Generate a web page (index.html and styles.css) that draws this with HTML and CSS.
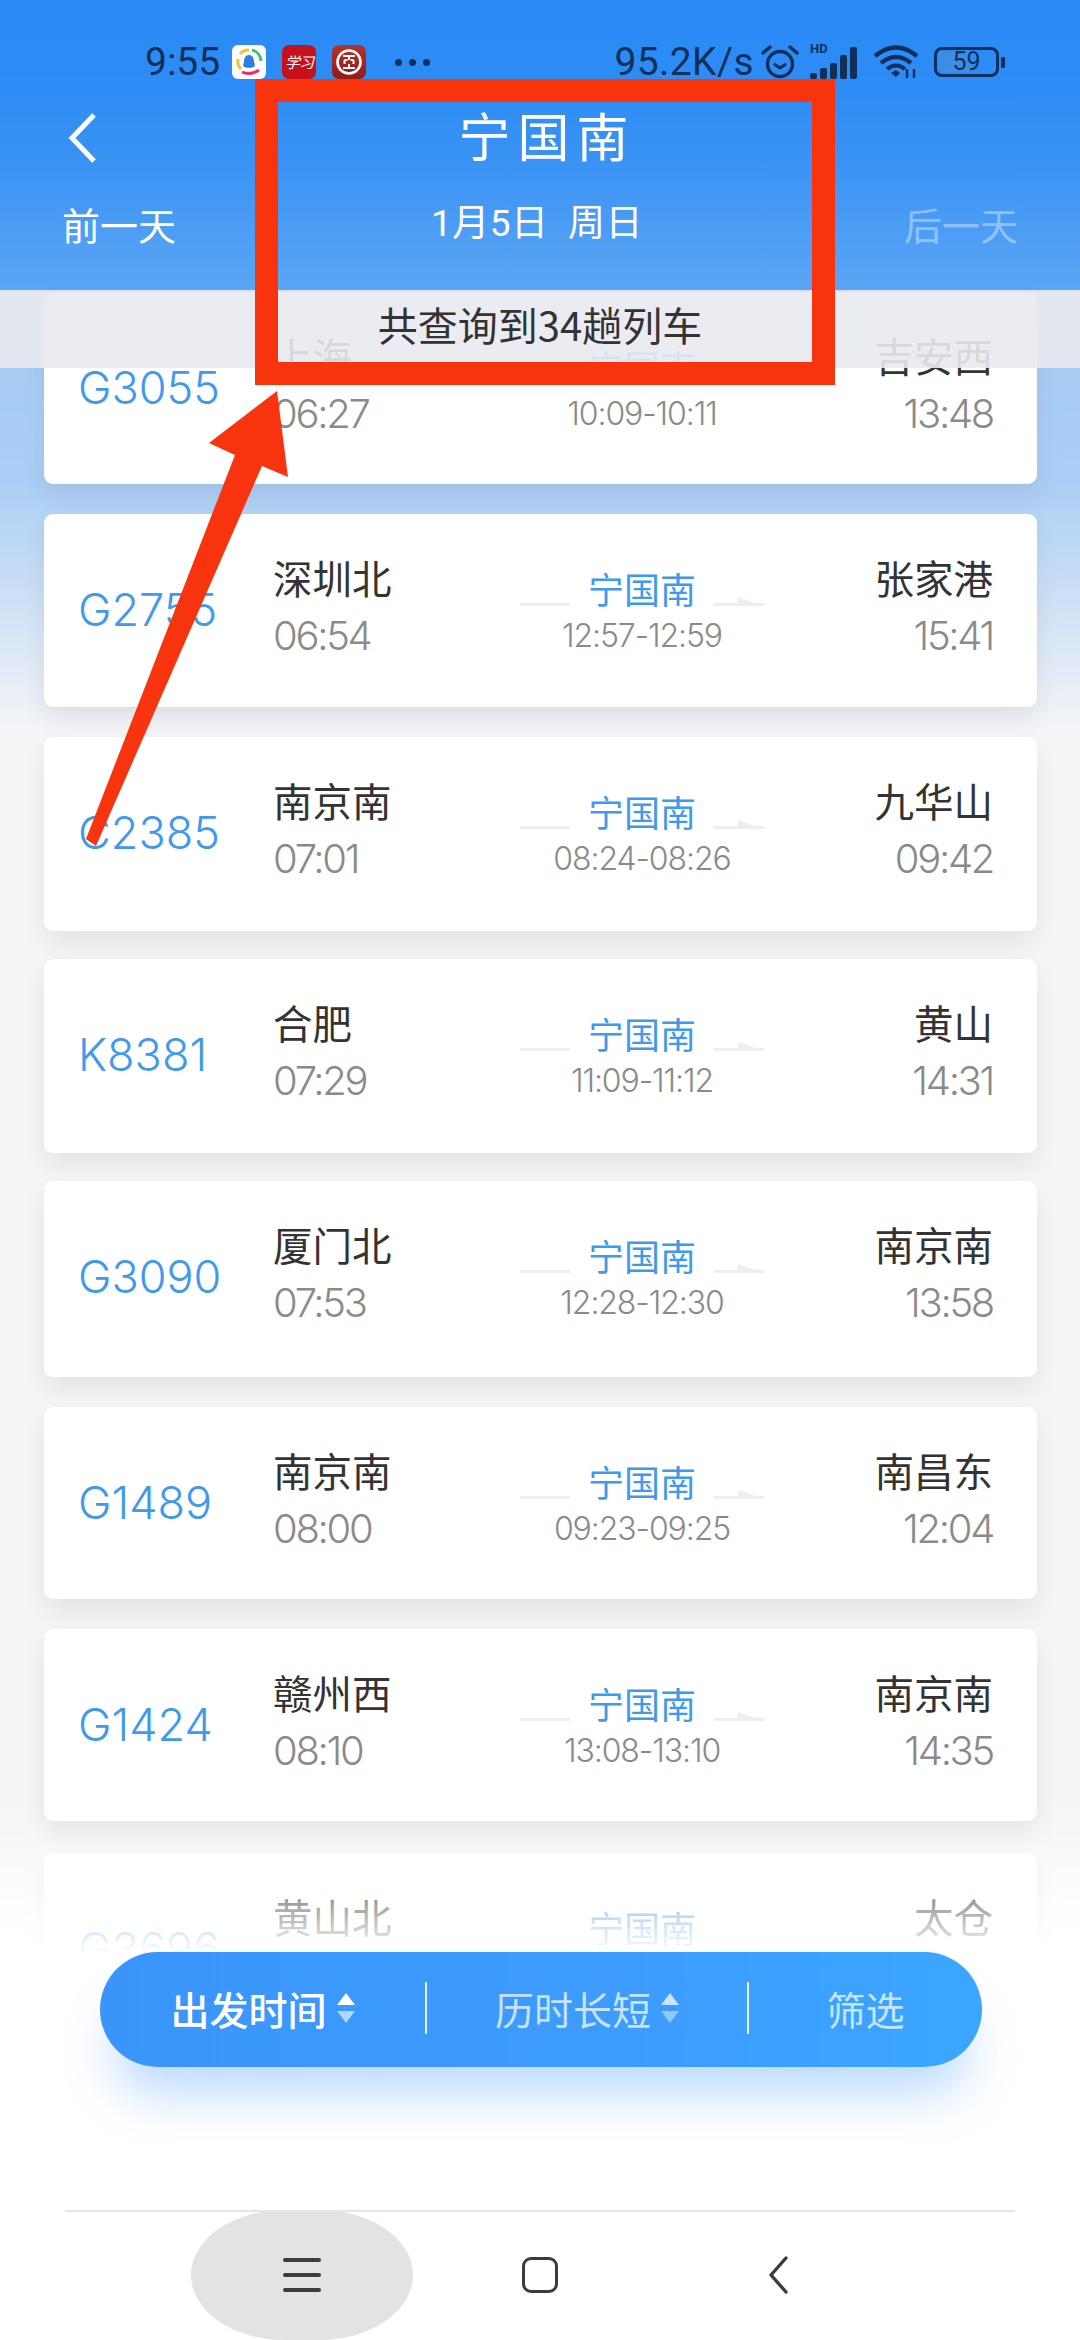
FILE: index.html
```html
<!DOCTYPE html>
<html lang="zh">
<head>
<meta charset="utf-8">
<title>宁国南</title>
<link rel="stylesheet" href="styles.css">
</head>
<body>
<div class="screen">
  <header class="header">
    <div class="status">
      <div class="status-left">
        <span class="clock">9:55</span>
        <svg class="app" viewBox="0 0 34 34"><rect width="34" height="34" rx="6" fill="#fff"/><path d="M9 24A11 11 0 0 1 6 14" fill="none" stroke="#f4c430" stroke-width="3"/><path d="M8 9A11 11 0 0 1 17 5" fill="none" stroke="#f4c430" stroke-width="3"/><path d="M20 5A12 12 0 0 1 29 16" fill="none" stroke="#3fc27a" stroke-width="3"/><path d="M10 27Q18 31 27 25" fill="none" stroke="#e8326e" stroke-width="3"/><path d="M17 10c4 0 5 4 5 7 1 2 1 4 0 5-2 1-8 1-10 0-1-1-1-3 0-5 0-3 1-7 5-7z" fill="#2c7de0"/></svg>
        <span class="app app-red">学习</span>
        <svg class="app" viewBox="0 0 34 34"><defs><linearGradient id="icbc" x1="0" y1="0" x2="0" y2="1"><stop offset="0" stop-color="#b9302a"/><stop offset="1" stop-color="#8f1d17"/></linearGradient></defs><rect width="34" height="34" rx="7" fill="url(#icbc)"/><circle cx="17" cy="17" r="11.5" fill="none" stroke="#fff" stroke-width="2.6"/><path d="M11 11h12M17 11v4M12.500 15h3M18.500 15h3M12.500 15v4M21.500 15v4M17 19v4M11 23h12" fill="none" stroke="#fff" stroke-width="2"/></svg>
        <span class="more"><i></i><i></i><i></i></span>
      </div>
      <div class="status-right">
        <span class="speed">95.2K/s</span>
        <svg class="ic-alarm" viewBox="0 0 40 34"><circle cx="20" cy="19" r="12.500" fill="none" stroke="#10305a" stroke-width="3.4"/><path d="M14 19l6 4 6-4" fill="none" stroke="#10305a" stroke-width="3"/><path d="M3 8l7-6M37 8l-7-6" stroke="#10305a" stroke-width="3.4" stroke-linecap="round"/></svg>
        <span class="signal"><span class="hd">HD</span><i class="b1"></i><i class="b2"></i><i class="b3"></i><i class="b4"></i><i class="b5"></i></span>
        <svg class="ic-wifi" viewBox="0 0 46 34"><path d="M2 11Q23-6 44 11" fill="none" stroke="#10305a" stroke-width="4.500"/><path d="M8 18Q23 6 38 18" fill="none" stroke="#10305a" stroke-width="4.500"/><path d="M14 24Q23 17 32 24" fill="none" stroke="#10305a" stroke-width="4"/><path d="M18 28l5-3 4 3-4 4z" fill="#10305a"/><path d="M34 24v9M41 24v9" stroke="#10305a" stroke-width="2.500"/></svg>
        <span class="battery"><span class="battery-fill"></span><span class="battery-num">59</span></span><span class="nub"></span>
      </div>
    </div>
    <div class="titlebar">
      <svg class="back" viewBox="0 0 32 52"><path d="M28 3L6 26l22 23" fill="none" stroke="#fff" stroke-width="5"/></svg>
      <h1 class="title">宁国南</h1>
    </div>
    <div class="datebar">
      <span class="day">前一天</span>
      <span class="date">1月5日&nbsp;&nbsp;周日</span>
      <span class="day day-off">后一天</span>
    </div>
  </header>

  <main class="list">
    <article class="card">
      <div class="num">G3055</div>
      <div class="from"><div class="stn">上海</div><div class="tm">06:27</div></div>
      <div class="mid"><div class="via"><span class="ln"></span><span class="vname">宁国南</span><span class="ln ln-r"></span></div><div class="stop">10:09-10:11</div></div>
      <div class="to"><div class="stn">吉安西</div><div class="tm">13:48</div></div>
    </article>
    <article class="card">
      <div class="num">G2755</div>
      <div class="from"><div class="stn">深圳北</div><div class="tm">06:54</div></div>
      <div class="mid"><div class="via"><span class="ln"></span><span class="vname">宁国南</span><span class="ln ln-r"></span></div><div class="stop">12:57-12:59</div></div>
      <div class="to"><div class="stn">张家港</div><div class="tm">15:41</div></div>
    </article>
    <article class="card">
      <div class="num">C2385</div>
      <div class="from"><div class="stn">南京南</div><div class="tm">07:01</div></div>
      <div class="mid"><div class="via"><span class="ln"></span><span class="vname">宁国南</span><span class="ln ln-r"></span></div><div class="stop">08:24-08:26</div></div>
      <div class="to"><div class="stn">九华山</div><div class="tm">09:42</div></div>
    </article>
    <article class="card">
      <div class="num">K8381</div>
      <div class="from"><div class="stn">合肥</div><div class="tm">07:29</div></div>
      <div class="mid"><div class="via"><span class="ln"></span><span class="vname">宁国南</span><span class="ln ln-r"></span></div><div class="stop">11:09-11:12</div></div>
      <div class="to"><div class="stn">黄山</div><div class="tm">14:31</div></div>
    </article>
    <article class="card">
      <div class="num">G3090</div>
      <div class="from"><div class="stn">厦门北</div><div class="tm">07:53</div></div>
      <div class="mid"><div class="via"><span class="ln"></span><span class="vname">宁国南</span><span class="ln ln-r"></span></div><div class="stop">12:28-12:30</div></div>
      <div class="to"><div class="stn">南京南</div><div class="tm">13:58</div></div>
    </article>
    <article class="card">
      <div class="num">G1489</div>
      <div class="from"><div class="stn">南京南</div><div class="tm">08:00</div></div>
      <div class="mid"><div class="via"><span class="ln"></span><span class="vname">宁国南</span><span class="ln ln-r"></span></div><div class="stop">09:23-09:25</div></div>
      <div class="to"><div class="stn">南昌东</div><div class="tm">12:04</div></div>
    </article>
    <article class="card">
      <div class="num">G1424</div>
      <div class="from"><div class="stn">赣州西</div><div class="tm">08:10</div></div>
      <div class="mid"><div class="via"><span class="ln"></span><span class="vname">宁国南</span><span class="ln ln-r"></span></div><div class="stop">13:08-13:10</div></div>
      <div class="to"><div class="stn">南京南</div><div class="tm">14:35</div></div>
    </article>
    <article class="card">
      <div class="num">G3696</div>
      <div class="from"><div class="stn">黄山北</div></div>
      <div class="mid"><div class="via"><span class="ln"></span><span class="vname">宁国南</span><span class="ln ln-r"></span></div></div>
      <div class="to"><div class="stn">太仓</div></div>
    </article>
  </main>

  <div class="summary">共查询到34趟列车</div>
  <div class="fade"></div>

  <div class="sortbar">
    <div class="sort sort-on">出发时间<span class="carets"><i class="up"></i><i class="down"></i></span></div>
    <div class="sort sort-line">历时长短<span class="carets"><i class="up"></i><i class="down"></i></span></div>
    <div class="sort">筛选</div>
  </div>

  <nav class="sysnav">
    <span class="recent"><i></i><i></i><i></i></span>
    <span class="home"></span>
    <svg class="sysback" viewBox="0 0 20 38"><path d="M18 2L3 19l15 17" fill="none" stroke="#3c3c3c" stroke-width="3.400" stroke-linecap="round" stroke-linejoin="round"/></svg>
  </nav>

  <div class="redbox"></div>
  <svg class="redarrow" viewBox="0 0 1080 2340"><path d="M277 391L288 477 262 466 96 846 86 839 235 455 209 443Z" fill="#f8340f"/></svg>
</div>
</body>
</html>
```
FILE: styles.css
```css
* { box-sizing: border-box; }
html, body { margin: 0; padding: 0; }
body { font-family: "Noto Sans CJK SC", Roboto, sans-serif; background: #fff; }
i { display: block; font-style: normal; }

.screen {
  position: relative;
  width: 1080px;
  height: 2340px;
  overflow: hidden;
  background: linear-gradient(180deg, #a0c8f4 0, #aacef5 480px, #f4f5f7 730px, #f5f5f5 1800px, #fff 1950px);
}

/* header */
.header {
  height: 292px;
  background: linear-gradient(180deg, #2a8af5 0, #2d8cf5 90px, #3c94f4 170px, #5ba6f4 290px);
  color: #fff;
}
.status {
  height: 102px;
  padding: 42px 75px 0 145px;
  display: flex;
  justify-content: space-between;
  align-items: flex-start;
  color: #10305a;
  font-family: Roboto, sans-serif;
}
.status-left, .status-right { display: flex; align-items: center; height: 40px; }
.clock { font-size: 39px; line-height: 40px; width: 87px; }
.app { display: block; width: 34px; height: 34px; margin-right: 16px; }
.app-red {
  background: #c8101a;
  border-radius: 7px;
  color: #fff;
  font: italic 15px/34px "Noto Sans CJK SC", sans-serif;
  text-align: center;
  letter-spacing: -1px;
  white-space: nowrap;
  overflow: hidden;
}
.more { display: flex; gap: 7px; margin-left: 13px; }
.more i { width: 7px; height: 7px; border-radius: 50%; background: #10305a; }
.speed { font-size: 39px; line-height: 40px; margin-right: 6px; letter-spacing: .4px; }
.ic-alarm { width: 40px; height: 34px; margin-right: 10px; }
.signal { position: relative; display: flex; align-items: flex-end; gap: 3px; width: 50px; height: 34px; margin-right: 13px; }
.signal i { width: 7px; background: #10305a; border-radius: 2px; }
.signal .b1 { height: 6px; }
.signal .b2 { height: 11px; }
.signal .b3 { height: 16px; }
.signal .b4 { height: 24px; }
.signal .b5 { height: 32px; }
.hd { position: absolute; left: 0; top: -3px; font-size: 13px; line-height: 14px; font-weight: 700; }
.ic-wifi { width: 46px; height: 34px; margin-right: 15px; }
.battery { position: relative; width: 65px; height: 30px; border: 3px solid #10305a; border-radius: 8px; }
.battery-fill { position: absolute; left: 2px; top: 2px; bottom: 2px; width: 32px; background: #4a90d9; border-radius: 3px; opacity: .6; }
.battery-num { position: relative; display: block; text-align: center; font-size: 25px; line-height: 24px; }
.nub { width: 4px; height: 11px; margin-left: 2px; background: #10305a; border-radius: 1px; }

.titlebar { position: relative; height: 99px; text-align: center; }
.back { position: absolute; left: 66px; top: 10px; width: 32px; height: 52px; }
.title { margin: 0 0 0 14px; font-size: 52px; line-height: 66px; font-weight: 400; letter-spacing: 7px; }
.datebar { display: flex; justify-content: space-between; align-items: center; padding: 0 62px; height: 46px; }
.day { font-size: 38px; line-height: 46px; }
.day-off { opacity: .38; }
.date { font-size: 37px; line-height: 46px; margin-left: -6px; font-family: Roboto, "Noto Sans CJK SC", sans-serif; letter-spacing: .5px; }

/* list */
.list { display: flex; flex-direction: column; padding: 0 43px 0 44px; }
.card {
  flex: none;
  display: grid;
  grid-template-columns: 195px 247px 244px 229px;
  height: 192px;
  margin-bottom: 30px;
  padding: 39px 0 0 34px;
  background: #fff;
  border-radius: 9px;
  box-shadow: 0 12px 26px rgba(0, 0, 0, .07);
}
.card:nth-child(2) { height: 193px; }
.card:nth-child(3) { height: 194px; margin-bottom: 28px; }
.card:nth-child(4) { height: 194px; margin-bottom: 28px; }
.card:nth-child(5) { height: 196px; }
.card:nth-child(7) { margin-bottom: 32px; }
.num { font-family: Inter, sans-serif; font-size: 45px; font-weight: 350; line-height: 113px; color: #3f99ec; }
.stn { font-size: 39.5px; line-height: 48px; color: #333; }
.tm { margin-top: 11px; font-family: Inter, sans-serif; font-size: 40px; font-weight: 300; line-height: 48px; letter-spacing: -2.300px; color: #8a8a8a; }
.to { text-align: right; }
.mid { padding-top: 13px; text-align: center; }
.via { display: flex; justify-content: center; align-items: flex-end; gap: 18px; height: 44px; }
.vname { font-size: 36px; line-height: 44px; color: #3f99ec; }
.ln { position: relative; width: 50px; height: 3px; margin-bottom: 4px; background: #eee; }
.ln-r::after {
  content: "";
  position: absolute;
  right: 0;
  bottom: 0;
  width: 26px;
  height: 9px;
  background: #eee;
  clip-path: polygon(0 0, 100% 100%, 0 100%);
}
.stop { margin-top: 8px; font-family: Inter, sans-serif; font-size: 32px; font-weight: 300; line-height: 36px; letter-spacing: -1.100px; color: #8a8a8a; }

/* overlays */
.summary {
  position: absolute;
  left: 0;
  top: 290px;
  width: 100%;
  height: 78px;
  background: rgba(233, 234, 239, .9);
  color: #333;
  font-size: 40px;
  line-height: 68px;
  text-align: center;
  font-family: "Noto Sans CJK SC", Roboto, sans-serif;
}
.fade {
  position: absolute;
  left: 0;
  top: 1840px;
  width: 100%;
  height: 370px;
  background: linear-gradient(180deg, rgba(255, 255, 255, 0) 0, rgba(255, 255, 255, .5) 60px, #fff 115px);
}
.sortbar {
  position: absolute;
  left: 100px;
  top: 1952px;
  width: 882px;
  height: 115px;
  display: grid;
  grid-template-columns: 325px 324px 233px;
  align-items: center;
  padding-bottom: 4px;
  border-radius: 58px / 58px;
  background: linear-gradient(90deg, #3a95fb 0, #3c9cfd 60%, #3ba6ff 100%);
  box-shadow: 0 40px 50px -14px rgba(60, 150, 255, .35);
  color: rgba(255, 255, 255, .72);
  font-size: 39px;
  line-height: 52px;
}
.sort { display: flex; justify-content: center; align-items: center; gap: 10px; }
.sort-on { color: #fff; font-weight: 500; }
.sort-line { border-left: 2px solid rgba(255, 255, 255, .85); border-right: 2px solid rgba(255, 255, 255, .85); }
.carets { display: flex; flex-direction: column; gap: 6px; }
.carets i { width: 0; height: 0; border-left: 9px solid transparent; border-right: 9px solid transparent; }
.carets .up { border-bottom: 12px solid currentColor; }
.carets .down { border-top: 12px solid currentColor; opacity: .6; }

.sysnav {
  position: absolute;
  left: 0;
  bottom: 0;
  width: 100%;
  height: 130px;
  background: #fff;
  display: flex;
  align-items: center;
}
.sysnav::before {
  content: "";
  position: absolute;
  left: 65px;
  right: 65px;
  top: 0;
  height: 2px;
  background: #e6e6e6;
}
.recent {
  margin-left: 191px;
  width: 222px;
  height: 130px;
  border-radius: 42% / 50%;
  background: #e3e3e3;
  display: flex;
  flex-direction: column;
  align-items: center;
  justify-content: center;
  gap: 11px;
}
.recent i { width: 38px; height: 4px; background: #3c3c3c; border-radius: 2px; }
.home { margin-left: 109px; width: 36px; height: 36px; border: 3.400px solid #3c3c3c; border-radius: 9px; }
.sysback { margin-left: 210px; width: 20px; height: 38px; }

.redbox {
  position: absolute;
  left: 255px;
  top: 79px;
  width: 580px;
  height: 306px;
  border: 23px solid #f8340f;
}
.redarrow { position: absolute; left: 0; top: 0; width: 1080px; height: 2340px; pointer-events: none; }
```
